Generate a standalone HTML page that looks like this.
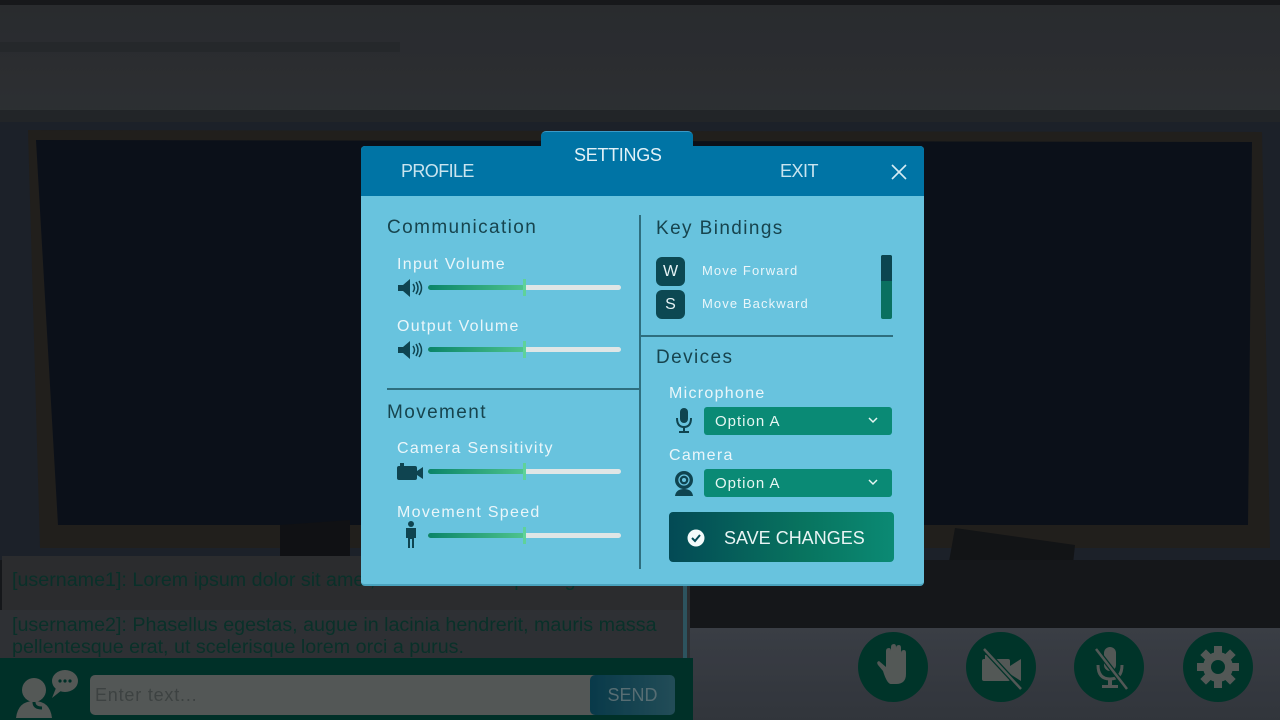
<!DOCTYPE html>
<html><head><meta charset="utf-8"><style>
*{margin:0;padding:0;box-sizing:border-box}
body{width:1280px;height:720px;overflow:hidden;position:relative;background:#222529;font-family:"Liberation Sans",sans-serif}
.a{position:absolute}
.dim{position:absolute;left:0;top:0;width:1280px;height:720px;filter:brightness(.78)}
.h{color:#17444e;font-size:19px;letter-spacing:1.4px}
.l{color:#eaf6fa;font-size:16px;letter-spacing:1.3px}
.tr{position:absolute;left:428px;width:193px;height:5px;border-radius:3px;background:#dfe6e6}
.tr i{position:absolute;left:0;top:0;height:5px;width:97px;border-radius:3px;background:linear-gradient(90deg,#0a8468,#4ec48e)}
.tr b{position:absolute;left:95px;top:-6px;width:3px;height:17px;background:#5fd29a}
.key{position:absolute;left:656px;width:29px;height:29px;border-radius:6px;background:#0c4852;color:#e6f2f4;font-size:16px;text-align:center;line-height:29px}
.kt{position:absolute;left:702px;color:#eaf6fa;font-size:13px;letter-spacing:1.1px}
.dd{position:absolute;left:704px;width:188px;height:28px;background:#0a8a75;border-radius:3px;color:#e6f6f2;font-size:15px;line-height:28px;padding-left:11px;letter-spacing:1px}
.dd svg{position:absolute;right:14px;top:10px}
.cb{position:absolute;width:70px;height:70px;border-radius:50%;background:#004335;top:632px}
</style></head><body>
<div class="dim">
<div class="a" style="left:0;top:0;width:1280px;height:5px;background:#1d1f22"></div>
<div class="a" style="left:0;top:5px;width:1280px;height:115px;background:linear-gradient(180deg,#34373b,#3a3d41)"></div>
<div class="a" style="left:0;top:42px;width:400px;height:10px;background:#303337"></div>
<div class="a" style="left:0;top:110px;width:1280px;height:12px;background:#2c2f33"></div>
<div class="a" style="left:0;top:122px;width:1280px;height:440px;background:#242a34"></div>
<svg class="a" style="left:0;top:0" width="1280" height="720">
<polygon points="28,130 1262,132 1270,548 40,548" fill="#2a2824"/>
<polygon points="36,140 1252,142 1248,525 58,525" fill="#0e1520"/>
<polygon points="280,525 350,520 350,560 280,560" fill="#141619"/>
<polygon points="955,528 1075,545 1065,640 935,640" fill="#17191c"/>
</svg>
<div class="a" style="left:0;top:560px;width:1280px;height:70px;background:#1b1d21"></div>
<div class="a" style="left:690px;top:628px;width:590px;height:92px;background:linear-gradient(180deg,#4a4f58,#3f444c)"></div>
<div class="a" style="left:2px;top:556px;width:688px;height:104px;background:#37393b"></div>
<div class="a" style="left:0;top:610px;width:690px;height:50px;background:#3b3e43"></div>
<div class="a" style="left:683px;top:570px;width:4px;height:90px;background:#3a6a78"></div>
<div class="a" style="left:12px;top:569px;font-size:19.7px;color:#0c3d34;line-height:22px;width:670px">[username1]: Lorem ipsum dolor sit amet, consectetur adipiscing</div>
<div class="a" style="left:12px;top:614px;font-size:19.7px;color:#0c3d34;line-height:22px;width:670px">[username2]: Phasellus egestas, augue in lacinia hendrerit, mauris massa pellentesque erat, ut scelerisque lorem orci a purus.</div>
<div class="a" style="left:0;top:658px;width:693px;height:62px;background:#003d33"></div>
<svg class="a" style="left:12px;top:668px" width="70" height="52"><circle cx="22" cy="22" r="12" fill="#6c716e"/><path d="M4 50 Q6 33 22 33 Q38 33 40 50Z" fill="#6c716e"/><path d="M22 34 Q22 40 30 40" stroke="#003d33" stroke-width="3" fill="none"/><ellipse cx="53" cy="13" rx="13" ry="11" fill="#6c716e"/><path d="M44 20 L40 30 L50 22Z" fill="#6c716e"/><circle cx="48" cy="13" r="1.6" fill="#003d33"/><circle cx="53" cy="13" r="1.6" fill="#003d33"/><circle cx="58" cy="13" r="1.6" fill="#003d33"/></svg>
<div class="a" style="left:90px;top:675px;width:510px;height:40px;background:#6b706e;border-radius:5px;color:#4e5554;font-size:18px;line-height:40px;padding-left:5px;letter-spacing:.8px">Enter text...</div>
<div class="a" style="left:590px;top:675px;width:85px;height:40px;border-radius:5px;background:linear-gradient(90deg,#0b4a5e,#2c6270);color:#6f8c93;font-size:18px;text-align:center;line-height:40px">SEND</div>
<div class="cb" style="left:858px"><svg width="70" height="70"><path d="M25 39 L20 33 Q18 30 21 29 L28 35 L28 19 Q28 16 31 16 Q33 16 33 19 L33 30 L33 15 Q33 12 36 12 Q38 12 38 15 L38 30 L38 16 Q38 13 41 13 Q43 13 43 16 L43 31 L43 21 Q43 18 46 18 Q48 18 48 21 L48 42 Q48 52 38 52 L33 52 Q29 52 25 39Z" fill="#6b716e"/></svg></div>
<div class="cb" style="left:966px"><svg width="70" height="70"><rect x="16" y="27" width="28" height="22" rx="2" fill="#6b716e"/><rect x="19" y="23" width="8" height="5" fill="#6b716e"/><path d="M44 34 L55 27 L55 49 L44 42Z" fill="#6b716e"/><line x1="18" y1="17" x2="55" y2="57" stroke="#004335" stroke-width="5"/><line x1="18" y1="17" x2="55" y2="57" stroke="#6b716e" stroke-width="2.5"/></svg></div>
<div class="cb" style="left:1074px"><svg width="70" height="70"><rect x="30" y="15" width="12" height="24" rx="6" fill="#6b716e"/><path d="M24 33 Q24 47 36 47 Q48 47 48 33" stroke="#6b716e" stroke-width="3" fill="none"/><rect x="34" y="47" width="4" height="6" fill="#6b716e"/><rect x="28" y="53" width="16" height="3" fill="#6b716e"/><line x1="22" y1="17" x2="53" y2="57" stroke="#004335" stroke-width="5"/><line x1="22" y1="17" x2="53" y2="57" stroke="#6b716e" stroke-width="2.5"/></svg></div>
<div class="cb" style="left:1183px"><svg width="70" height="70"><g transform="translate(35 35)" fill="#6b716e"><circle r="15"/><g id="t"><rect x="-4" y="-21" width="8" height="8"/></g><use href="#t" transform="rotate(45)"/><use href="#t" transform="rotate(90)"/><use href="#t" transform="rotate(135)"/><use href="#t" transform="rotate(180)"/><use href="#t" transform="rotate(225)"/><use href="#t" transform="rotate(270)"/><use href="#t" transform="rotate(315)"/><circle r="7" fill="#004335"/></g></svg></div>
</div>
<!-- modal -->
<div class="a" style="left:361px;top:146px;width:563px;height:440px;background:#68c3de;border-radius:4px;border-bottom:2px solid #4aa3be"></div>
<div class="a" style="left:361px;top:146px;width:563px;height:50px;background:#0074a5;border-radius:4px 4px 0 0"></div>
<div class="a" style="left:541px;top:131px;width:152px;height:40px;background:#0074a5;border-radius:5px 5px 0 0;border-top:1px solid #3a9ac8"></div>
<div class="a" style="left:401px;top:161px;color:#c9e4ef;font-size:18px;letter-spacing:-.6px">PROFILE</div>
<div class="a" style="left:574px;top:145px;color:#e2f1f7;font-size:18px;letter-spacing:-.3px">SETTINGS</div>
<div class="a" style="left:780px;top:161px;color:#c9e4ef;font-size:18px;letter-spacing:-.5px">EXIT</div>
<svg class="a" style="left:891px;top:164px" width="16" height="16"><path d="M1 1L15 15M15 1L1 15" stroke="#d6ecf4" stroke-width="1.6"/></svg>
<div class="a" style="left:639px;top:215px;width:2px;height:354px;background:#2e6e7e"></div>
<div class="a" style="left:387px;top:388px;width:253px;height:2px;background:#2e6e7e"></div>
<div class="a" style="left:640px;top:335px;width:253px;height:2px;background:#2e6e7e"></div>
<div class="a h" style="left:387px;top:217px">Communication</div>
<div class="a l" style="left:397px;top:256px">Input Volume</div>
<div class="a l" style="left:397px;top:318px">Output Volume</div>
<div class="a h" style="left:387px;top:402px">Movement</div>
<div class="a l" style="left:397px;top:440px">Camera Sensitivity</div>
<div class="a l" style="left:397px;top:504px">Movement Speed</div>
<div class="tr" style="top:285px"><i></i><b></b></div>
<div class="tr" style="top:347px"><i></i><b></b></div>
<div class="tr" style="top:469px"><i></i><b></b></div>
<div class="tr" style="top:533px"><i></i><b></b></div>
<svg class="a" style="left:396px;top:278px" width="30" height="20"><path d="M2 7H7L14 1V19L7 13H2Z" fill="#0f4450"/><path d="M17 6Q20 10 17 14M20 4Q24 10 20 16M23 3Q28 10 23 17" stroke="#0f4450" stroke-width="1.5" fill="none"/></svg>
<svg class="a" style="left:396px;top:340px" width="30" height="20"><path d="M2 7H7L14 1V19L7 13H2Z" fill="#0f4450"/><path d="M17 6Q20 10 17 14M20 4Q24 10 20 16M23 3Q28 10 23 17" stroke="#0f4450" stroke-width="1.5" fill="none"/></svg>
<svg class="a" style="left:396px;top:462px" width="30" height="20"><rect x="1" y="4" width="20" height="14" rx="2" fill="#0f4450"/><rect x="4" y="1" width="4" height="4" fill="#0f4450"/><path d="M21 9L27 5V17L21 13Z" fill="#0f4450"/></svg>
<svg class="a" style="left:403px;top:521px" width="16" height="28"><circle cx="8" cy="3" r="3" fill="#0f4450"/><path d="M3 7H13V17H11V27H9V18H7V27H5V17H3Z" fill="#0f4450"/></svg>
<div class="a h" style="left:656px;top:218px">Key Bindings</div>
<div class="key" style="top:257px">W</div>
<div class="key" style="top:290px">S</div>
<div class="kt" style="top:263px">Move Forward</div>
<div class="kt" style="top:296px">Move Backward</div>
<div class="a" style="left:881px;top:255px;width:11px;height:64px;border-radius:2px;background:#0a7060"></div>
<div class="a" style="left:881px;top:255px;width:11px;height:26px;border-radius:2px 2px 0 0;background:#0b4550"></div>
<div class="a h" style="left:656px;top:347px">Devices</div>
<div class="a l" style="left:669px;top:385px">Microphone</div>
<div class="a l" style="left:669px;top:447px">Camera</div>
<svg class="a" style="left:674px;top:407px" width="20" height="28"><rect x="6" y="1" width="8" height="15" rx="4" fill="#0f4450"/><path d="M3 11Q3 20 10 20Q17 20 17 11" stroke="#0f4450" stroke-width="2" fill="none"/><rect x="9" y="20" width="2" height="4" fill="#0f4450"/><rect x="5" y="24" width="10" height="2" fill="#0f4450"/></svg>
<svg class="a" style="left:672px;top:469px" width="24" height="28"><circle cx="12" cy="11" r="9" fill="#0f4450"/><circle cx="12" cy="11" r="5" fill="none" stroke="#68c3de" stroke-width="1.3"/><circle cx="12" cy="11" r="2" fill="#68c3de"/><path d="M3 27Q4 20 12 20Q20 20 21 27Z" fill="#0f4450"/></svg>
<div class="dd" style="top:407px;line-height:29px">Option A<svg width="10" height="7"><path d="M1 1L5 5L9 1" stroke="#e6f6f2" stroke-width="1.5" fill="none"/></svg></div>
<div class="dd" style="top:469px;line-height:29px">Option A<svg width="10" height="7"><path d="M1 1L5 5L9 1" stroke="#e6f6f2" stroke-width="1.5" fill="none"/></svg></div>
<div class="a" style="left:669px;top:512px;width:225px;height:50px;border-radius:4px;background:linear-gradient(90deg,#034a55,#08745f 60%,#0b8a74)"></div>
<svg class="a" style="left:687px;top:529px" width="18" height="18"><circle cx="9" cy="9" r="8.5" fill="#f4fbfb"/><path d="M5 9L8 12L13 6" stroke="#034a55" stroke-width="2" fill="none"/></svg>
<div class="a" style="left:724px;top:528px;color:#e8f4f4;font-size:18px">SAVE CHANGES</div>
</body></html>
